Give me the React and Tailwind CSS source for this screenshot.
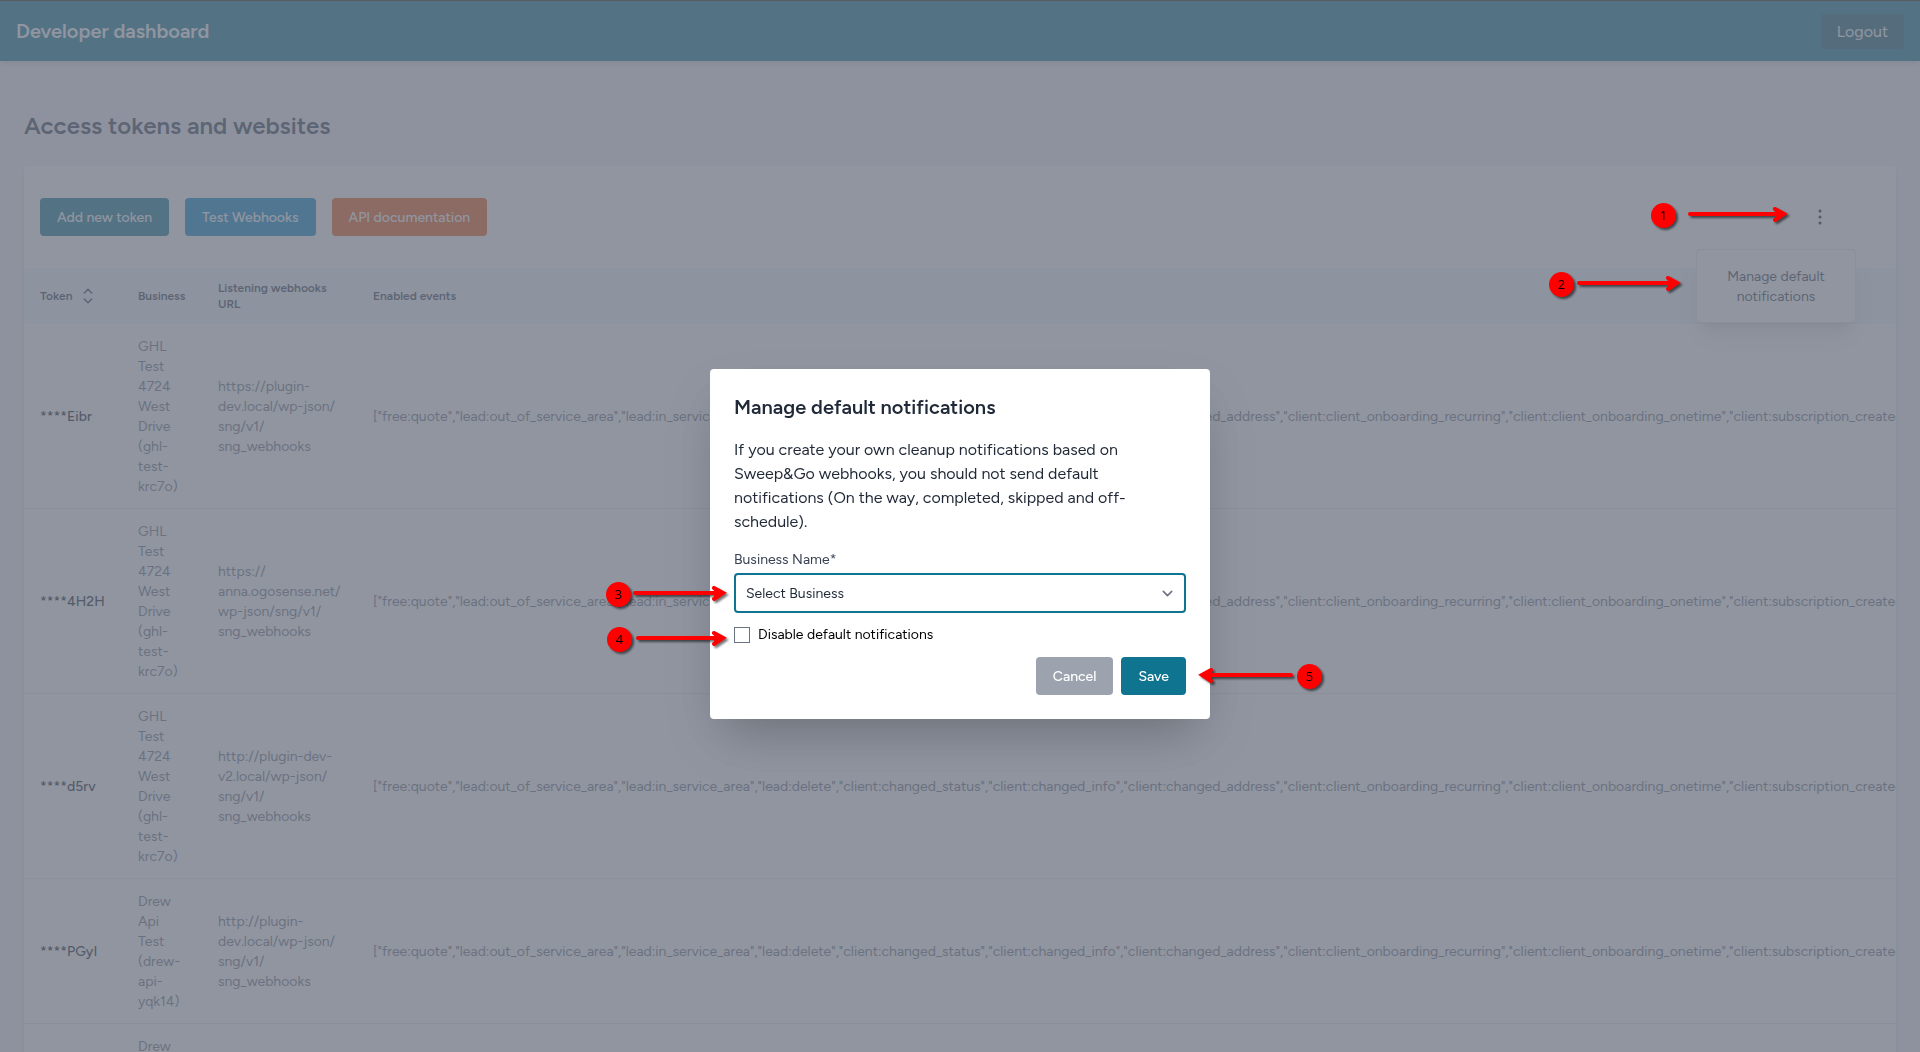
import { useState } from "react";

const EVENTS = [
    "free:quote",
    "lead:out_of_service_area",
    "lead:in_service_area",
    "lead:delete",
    "client:changed_status",
    "client:changed_info",
    "client:changed_address",
    "client:client_onboarding_recurring",
    "client:client_onboarding_onetime",
    "client:subscription_created",
];

const TOKENS = [
    {
        token: "****Eibr",
        business: "GHL Test 4724 West Drive (ghl-test-krc7o)",
        url: "https://plugin-dev.local/wp-json/sng/v1/sng_webhooks",
    },
    {
        token: "****4H2H",
        business: "GHL Test 4724 West Drive (ghl-test-krc7o)",
        url: "https://anna.ogosense.net/wp-json/sng/v1/sng_webhooks",
    },
    {
        token: "****d5rv",
        business: "GHL Test 4724 West Drive (ghl-test-krc7o)",
        url: "http://plugin-dev-v2.local/wp-json/sng/v1/sng_webhooks",
    },
    {
        token: "****PGyI",
        business: "Drew Api Test (drew-api-yqk14)",
        url: "http://plugin-dev.local/wp-json/sng/v1/sng_webhooks",
    },
    {
        token: "****k9Tz",
        business: "Drew Api Test (drew-api-yqk14)",
        url: "http://plugin-dev.local/wp-json/sng/v1/sng_webhooks",
    },
];

function Button({ className, children, ...props }) {
    return (
        <button
            type="button"
            className={`rounded border border-transparent px-4 pt-[9px] pb-[7px] text-sm font-medium text-white ${className}`}
            {...props}
        >
            {children}
        </button>
    );
}

// Long urls may only wrap after a slash or a hyphen
function WebhookUrl({ url }) {
    return url
        .split(/(?<=\/)(?!\/)/)
        .flatMap((part, i) => [part, <wbr key={i} />]);
}

// Numbered marker with an arrow pointing at a control
function Callout({ number, length, flip, className }) {
    return (
        <div
            className={`absolute flex items-center drop-shadow-[2px_2px_1px_rgba(0,0,0,0.55)] ${
                flip ? "flex-row-reverse" : ""
            } ${className}`}
        >
            <span className="flex h-[25px] w-[25px] items-center justify-center rounded-full bg-[#ff0000] font-['Open_Sans',sans-serif] text-[13px] leading-none text-black">
                {number}
            </span>
            <svg
                width={length}
                height="18"
                viewBox={`0 0 ${length} 18`}
                className={flip ? "-scale-x-100" : ""}
                fill="none"
                stroke="#ff0000"
                strokeWidth="4"
                strokeLinecap="round"
                aria-hidden="true"
            >
                <path d={`M2 7H${length - 6}`} />
                <path
                    d={`M${length - 13} 1.5L${length - 3} 7L${length - 13} 13Z`}
                    fill="#ff0000"
                    stroke="none"
                />
                <path d={`M${length - 13} 2L${length - 4} 7L${length - 13} 13`} />
            </svg>
        </div>
    );
}

function TokensTable() {
    return (
        <table className="w-full table-fixed text-left text-sm text-[#6b7280]">
            <colgroup>
                <col className="w-[98px]" />
                <col className="w-20" />
                <col className="w-[155px]" />
                <col />
            </colgroup>
            <thead className="bg-slate-100 text-xs text-[#374151]">
                <tr>
                    <th scope="col" className="px-4 py-3 font-semibold">
                        <div className="flex items-center gap-1">
                            Token
                            <svg
                                className="h-6 w-6 shrink-0"
                                viewBox="0 0 24 24"
                                fill="none"
                                stroke="currentColor"
                                strokeWidth="1.5"
                                strokeLinecap="round"
                                strokeLinejoin="round"
                                aria-hidden="true"
                            >
                                <path d="M8.25 15 12 18.75 15.75 15m-7.5-6L12 5.25 15.75 9" />
                            </svg>
                        </div>
                    </th>
                    <th scope="col" className="px-4 py-3 font-semibold">Business</th>
                    <th scope="col" className="px-4 py-3 font-semibold">Listening webhooks URL</th>
                    <th scope="col" className="px-4 py-3 font-semibold">Enabled events</th>
                </tr>
            </thead>
            <tbody>
                {TOKENS.map((row) => (
                    <tr key={row.token} className="border-b border-[#e5e7eb] bg-white">
                        <td className="px-4 pt-[13px] pb-[11px] font-medium text-[#111827]">{row.token}</td>
                        <td className="px-4 pt-[13px] pb-[11px]">{row.business}</td>
                        <td className="px-4 pt-[13px] pb-[11px]">
                            <WebhookUrl url={row.url} />
                        </td>
                        <td className="px-4 pt-[13px] pb-[11px] whitespace-nowrap">
                            {JSON.stringify(EVENTS)}
                        </td>
                    </tr>
                ))}
            </tbody>
        </table>
    );
}

function NotificationsModal() {
    const [business, setBusiness] = useState("");
    const [disabled, setDisabled] = useState(false);

    return (
        <div
            role="dialog"
            aria-modal="true"
            aria-labelledby="modal-title"
            className="relative w-full max-w-[500px] rounded bg-white p-6 shadow-2xl"
        >
            <h2 id="modal-title" className="text-xl font-semibold text-[#1f2937]">
                Manage default notifications
            </h2>
            <p className="mt-[17px] text-base text-[#1f2937]">
                If you create your own cleanup notifications based on Sweep&amp;Go webhooks, you
                should not send default notifications (On the way, completed, skipped and
                off-schedule).
            </p>

            <label htmlFor="business" className="mt-4 block text-sm text-[#374151]">
                Business Name*
            </label>
            <div className="relative mt-[3px]">
                <select
                    id="business"
                    value={business}
                    onChange={(e) => setBusiness(e.target.value)}
                    className="block h-10 w-full appearance-none rounded border-2 border-[#0e7490] bg-white px-2.5 pt-0.5 text-sm text-[#1f2937] outline-none"
                >
                    <option value="">Select Business</option>
                    <option value="ghl">GHL Test 4724 West Drive</option>
                    <option value="drew">Drew Api Test</option>
                </select>
                <svg
                    className="pointer-events-none absolute inset-y-0 right-2 my-auto h-[21px] w-[21px] text-[#6b7280]"
                    viewBox="0 0 20 20"
                    fill="none"
                    stroke="currentColor"
                    strokeWidth="1.5"
                    strokeLinecap="round"
                    strokeLinejoin="round"
                    aria-hidden="true"
                >
                    <path d="M6 8l4 4 4-4" />
                </svg>
            </div>

            <div className="mt-3 flex items-center gap-2">
                <input
                    id="disable"
                    type="checkbox"
                    checked={disabled}
                    onChange={(e) => setDisabled(e.target.checked)}
                    className="h-4 w-4 appearance-none border border-[#6b7280] bg-white checked:bg-[#0e7490]"
                />
                <label htmlFor="disable" className="text-sm text-black">
                    Disable default notifications
                </label>
            </div>

            <div className="mt-3 flex justify-end gap-2">
                <Button className="bg-[#9ca3af]">Cancel</Button>
                <Button className="bg-[#0e7490]">Save</Button>
            </div>

            <Callout number="3" length={94} className="top-[213px] right-[483px] gap-0.5" />
            <Callout number="4" length={91} className="top-[258px] right-[483px] gap-1" />
            <Callout number="5" length={95} flip className="top-[295px] left-[488px] gap-1" />
        </div>
    );
}

export default function App() {
    return (
        <div className="h-screen overflow-hidden bg-[#f3f4f6] font-[Figtree,Lato,sans-serif]">
            <header className="flex h-[61px] items-center justify-between border-t border-[#2a1a00] bg-[#0e7490] px-4 shadow-md">
                <h1 className="text-xl font-semibold text-white">Developer dashboard</h1>
                <button type="button" className="rounded bg-[#155e75] px-4 pt-1.5 pb-[5px] text-base text-white">
                    Logout
                </button>
            </header>

            <main className="px-6 pt-[49px]">
                <h2 className="text-2xl font-semibold text-[#374151]">Access tokens and websites</h2>

                <section className="mt-6 rounded bg-white shadow-md">
                    <div className="flex items-center justify-between py-8 pr-10 pl-4">
                        <div className="flex gap-4">
                            <Button className="bg-[#0e7490]">Add new token</Button>
                            <Button className="bg-[#0284c7]">Test Webhooks</Button>
                            <Button className="bg-[#ea580c]">API documentation</Button>
                        </div>
                        <div className="relative flex w-[72px] justify-center">
                            <button type="button" aria-label="More actions" className="py-[7px] text-[#111827]">
                                <svg className="h-6 w-6" viewBox="0 0 24 24" fill="currentColor" aria-hidden="true">
                                    <circle cx="12" cy="6" r="1.5" />
                                    <circle cx="12" cy="12" r="1.5" />
                                    <circle cx="12" cy="18" r="1.5" />
                                </svg>
                            </button>
                            <div className="absolute top-full right-0 mt-[13px] w-40 rounded border border-[#e5e7eb] bg-white shadow-xl">
                                <button type="button" className="w-full px-4 pt-[17px] pb-[15px] text-sm text-[#374151]">
                                    Manage default notifications
                                </button>
                            </div>
                        </div>
                    </div>
                    <div className="overflow-x-auto">
                        <TokensTable />
                    </div>
                </section>
            </main>

            <div className="fixed inset-0 bg-[#6b7280]/75" />
            <div className="fixed inset-0 flex items-center justify-center pt-9">
                <NotificationsModal />
                <Callout number="1" length={100} className="top-[203px] right-[132px] gap-3" />
                <Callout number="2" length={104} className="top-[272px] right-[239px] gap-[3px]" />
            </div>
        </div>
    );
}
